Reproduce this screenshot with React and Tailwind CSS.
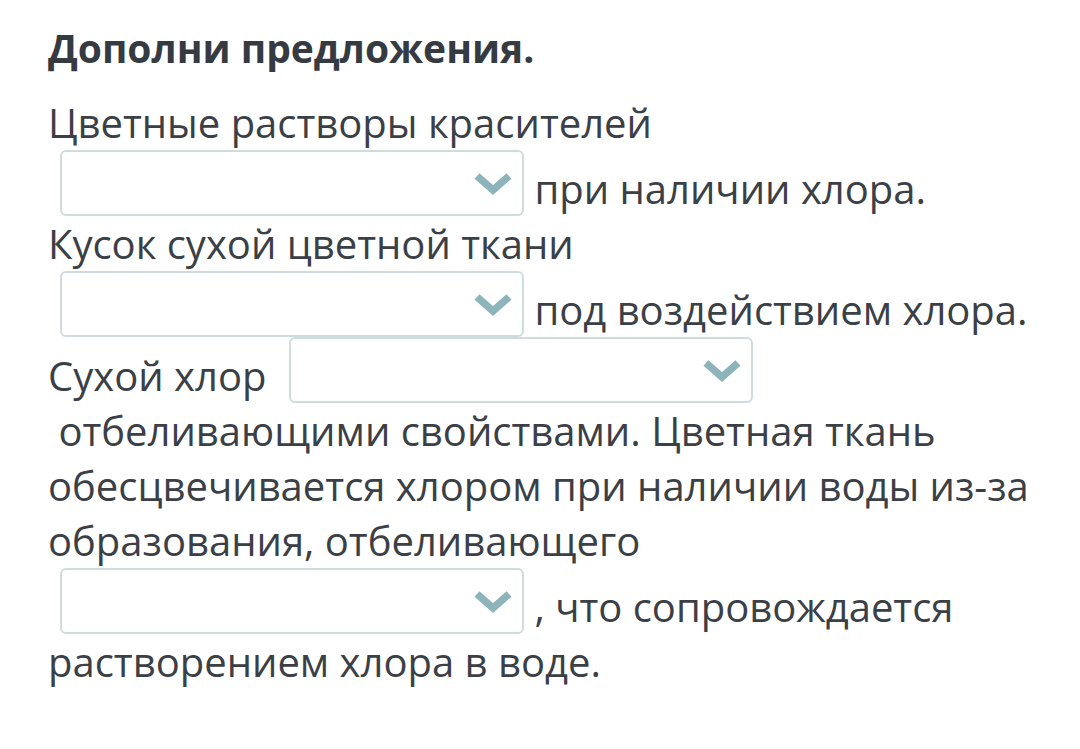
import React from "react";

function Sel() {
  return (
    <span className="inline-block overflow-hidden align-[-12px] ml-3 w-[464px] h-[66px] rounded-[6px] border-2 border-[#cfdcdc] bg-white">
      <span className="flex h-full items-center justify-end pr-[9px]">
        <svg width="40" height="26" viewBox="0 0 40 26" className="block">
          <polyline
            points="4,6 20,20 36,6"
            fill="none"
            stroke="#8db4ba"
            strokeWidth="7.5"
            strokeLinecap="butt"
            strokeLinejoin="miter"
          />
        </svg>
      </span>
    </span>
  );
}

export default function App() {
  return (
    <div className="min-h-[749px] w-[1080px] bg-white font-['Open_Sans',sans-serif] text-[#3b4046] pl-[48px] pr-[42px] pt-[21px]">
      <h1 className="text-[39px] leading-[54px] font-bold text-[#363b42] mb-[20px]">
        Дополни предложения.
      </h1>
      <p className="text-[40px] leading-[55px]">
        {"Цветные растворы красителей "}
        <Sel />
        {" при наличии хлора."}
        <br />
        {"Кусок сухой цветной ткани "}
        <Sel />
        {" под воздействием хлора."}
        <br />
        {"Сухой хлор "}
        <Sel />
        {" \u00a0отбеливающими свойствами. Цветная ткань обесцвечивается хлором при наличии воды из-за образования, отбеливающего "}
        <Sel />
        {" , что сопровождается растворением хлора в воде."}
      </p>
    </div>
  );
}
